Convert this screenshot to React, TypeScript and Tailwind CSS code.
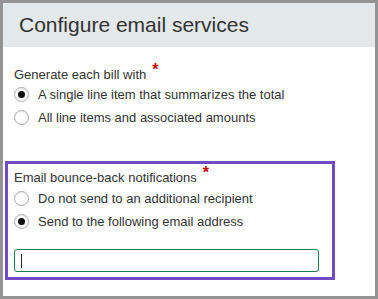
const font = { fontFamily: '"Liberation Sans", Arial, sans-serif' };

type RadioProps = { checked?: boolean; label: string };

const Radio = ({ checked, label }: RadioProps) => (
  <div className="flex h-[23px] items-center">
    <span className="flex h-[15px] w-[15px] items-center justify-center rounded-full border border-[#a9a9a9] bg-white shadow-[inset_0_1px_1px_rgba(0,0,0,0.08)]">
      {checked && <span className="h-[7px] w-[7px] rounded-full bg-[#111]" />}
    </span>
    <span className="ml-[9px] text-[13px] leading-4 text-[#333]">{label}</span>
  </div>
);

const Label = ({ text, className }: { text: string; className?: string }) => (
  <div className={"text-[13px] text-[#333] " + (className ?? "")}>
    {text}
    <span className="relative -top-[4px] ml-[6px] text-[16px] font-bold leading-[0] text-[#c00]">*</span>
  </div>
);

export default function App() {
  return (
    <div
      style={font}
      className="flex h-[299px] w-[378px] flex-col border-[3px] border-[#939393] bg-white"
    >
      <div className="flex h-[44px] shrink-0 items-center bg-[#e3e9ea] pl-[16px]">
        <h1 className="text-[21px] leading-6 text-[#333]">Configure email services</h1>
      </div>

      <div className="pl-[2px] pt-[20px]">
        <div className="pl-[9px]">
          <Label text="Generate each bill with" className="h-4 leading-4" />
          <Radio checked label="A single line item that summarizes the total" />
          <Radio label="All line items and associated amounts" />
        </div>

        <div className="mt-[32px] w-[330px] border-[3px] border-[#6f4cc3] px-[6px] pb-[5px] pt-[6px]">
          <Label text="Email bounce-back notifications" className="h-[17px] leading-4" />
          <Radio label="Do not send to an additional recipient" />
          <Radio checked label="Send to the following email address" />
          <div className="mt-[16px] flex h-[23px] w-[305px] items-center rounded-[3px] border border-[#1a7f4b] pl-[6px]">
            <span className="h-[14px] w-px bg-[#222]" />
          </div>
        </div>
      </div>
    </div>
  );
}
